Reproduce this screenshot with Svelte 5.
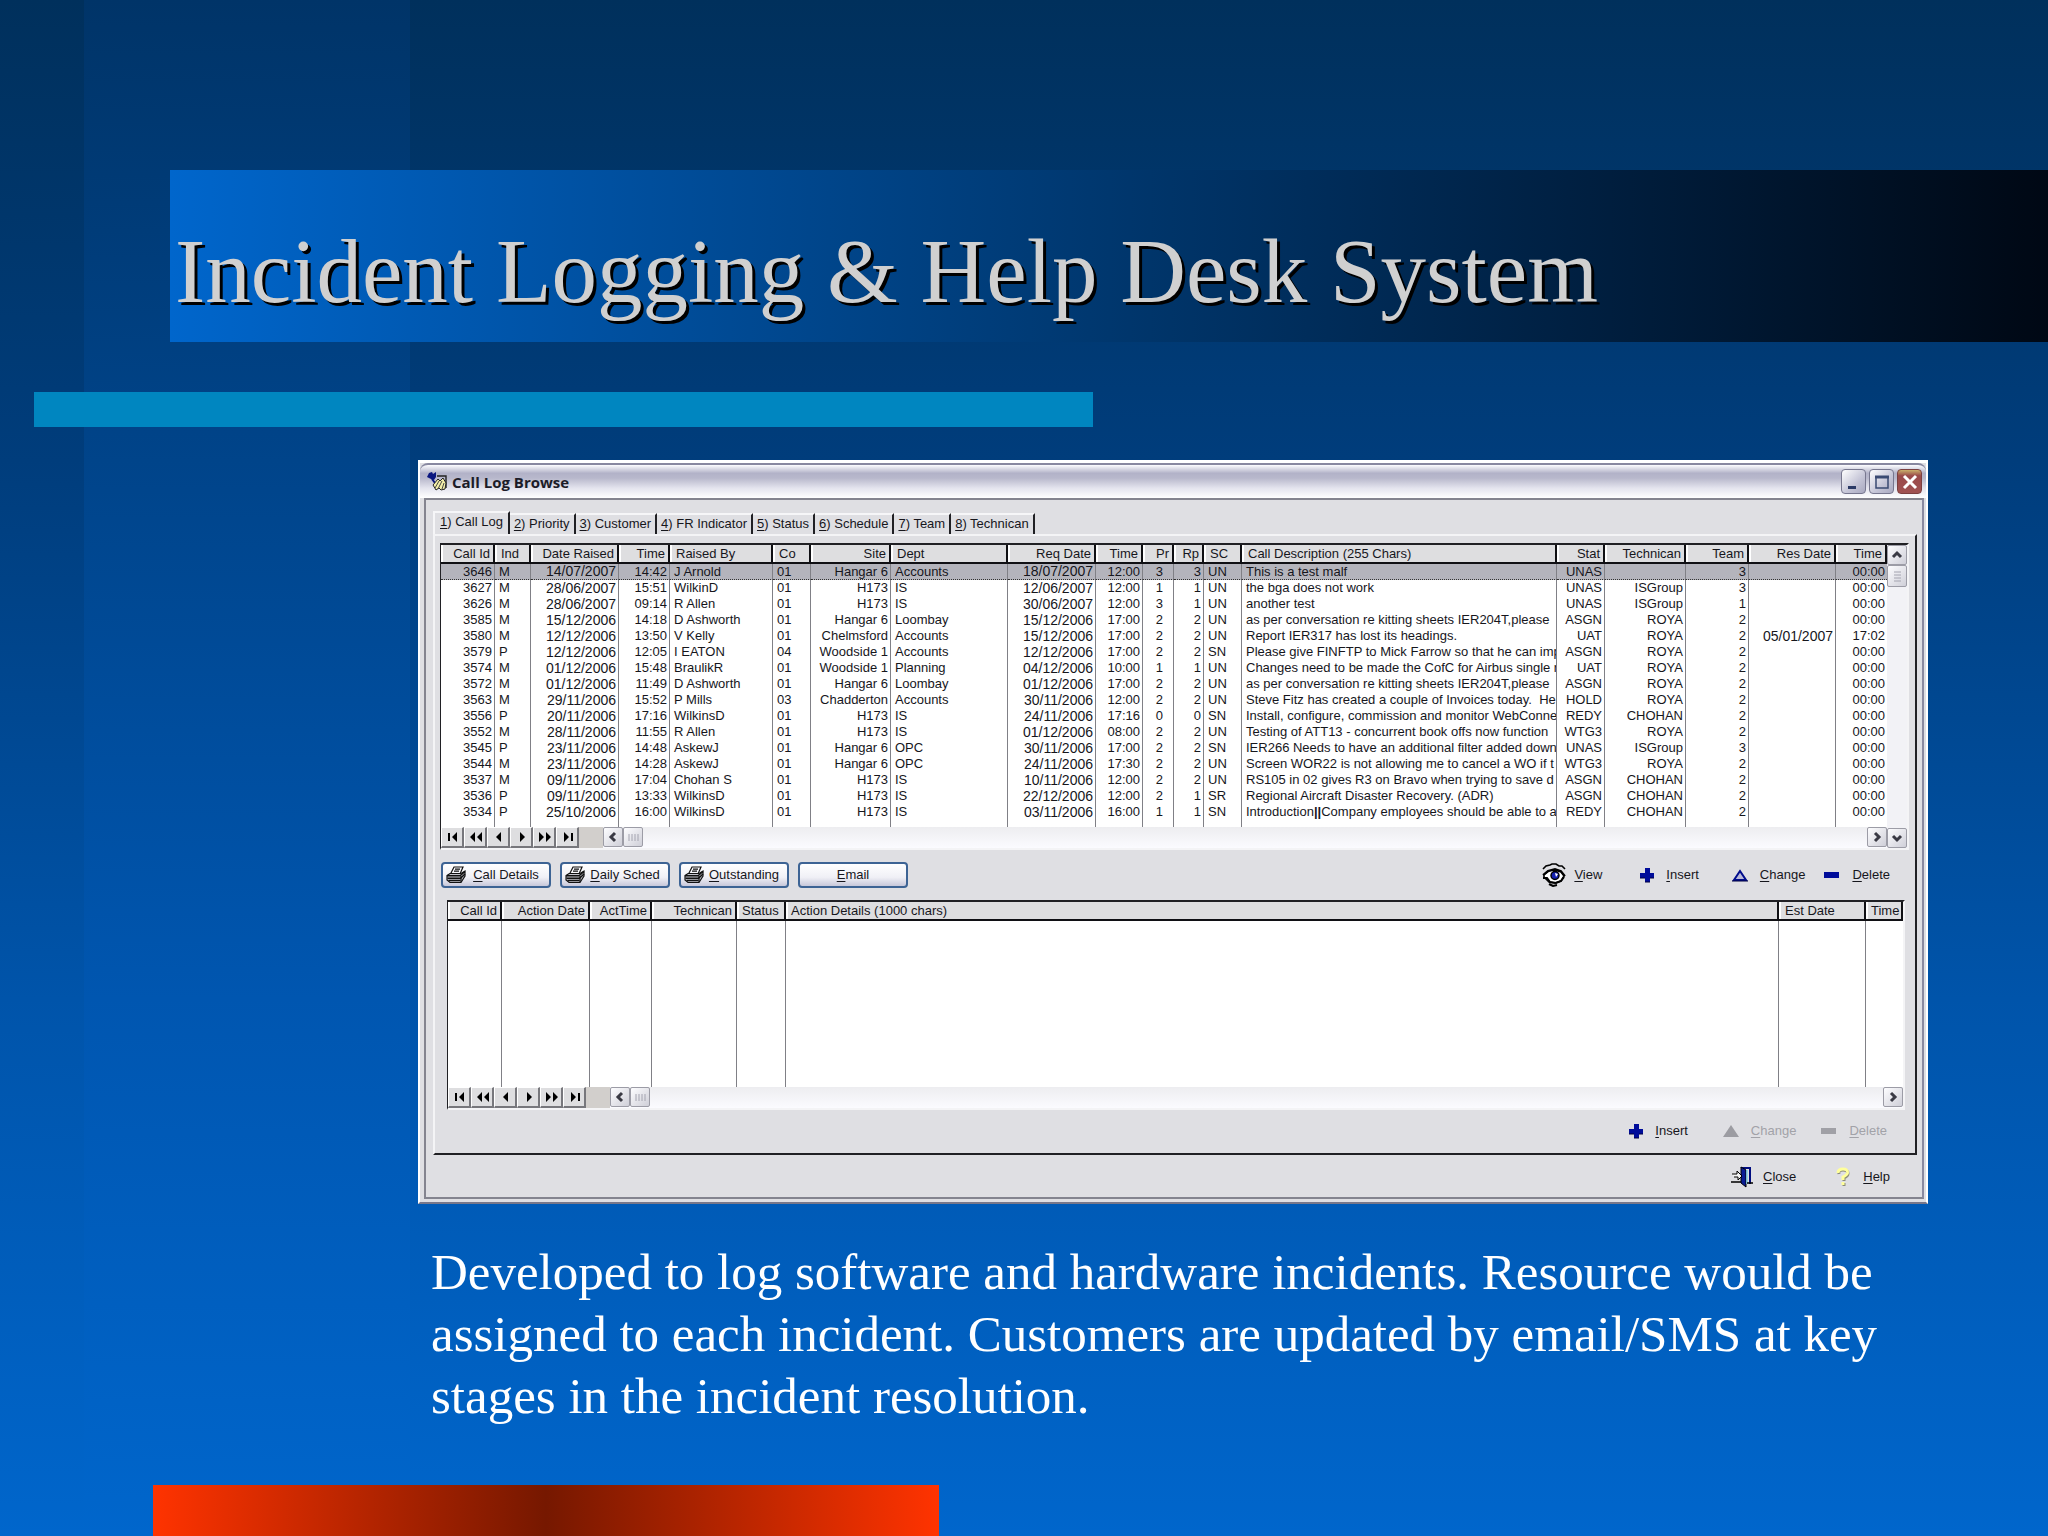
<script>
  const tabs = ['Call Log', 'Priority', 'Customer', 'FR Indicator', 'Status', 'Schedule', 'Team', 'Technican'];

  const callCols = [
    { t: 'Call Id', w: 'w54', r: true },
    { t: 'Ind', w: 'w36' },
    { t: 'Date Raised', w: 'w88', r: true, date: true },
    { t: 'Time', w: 'w51', r: true },
    { t: 'Raised By', w: 'w103' },
    { t: 'Co', w: 'w38' },
    { t: 'Site', w: 'w80', r: true },
    { t: 'Dept', w: 'w117' },
    { t: 'Req Date', w: 'w88', r: true, date: true },
    { t: 'Time', w: 'w47', r: true },
    { t: 'Pr', w: 'w31', r: true, pr: true },
    { t: 'Rp', w: 'w30', r: true },
    { t: 'SC', w: 'w38' },
    { t: 'Call Description (255 Chars)', w: 'auto' },
    { t: 'Stat', w: 'w48', r: true },
    { t: 'Technican', w: 'w81', r: true },
    { t: 'Team', w: 'w63', r: true },
    { t: 'Res Date', w: 'w87', r: true, date: true },
    { t: 'Time', w: 'w51', r: true }
  ];

  const calls = `3646|M|14/07/2007|14:42|J Arnold|01|Hangar 6|Accounts|18/07/2007|12:00|3|3|UN|This is a test malf|UNAS||3||00:00
3627|M|28/06/2007|15:51|WilkinD|01|H173|IS|12/06/2007|12:00|1|1|UN|the bga does not work|UNAS|ISGroup|3||00:00
3626|M|28/06/2007|09:14|R Allen|01|H173|IS|30/06/2007|12:00|3|1|UN|another test|UNAS|ISGroup|1||00:00
3585|M|15/12/2006|14:18|D Ashworth|01|Hangar 6|Loombay|15/12/2006|17:00|2|2|UN|as per conversation re kitting sheets IER204T,please|ASGN|ROYA|2||00:00
3580|M|12/12/2006|13:50|V Kelly|01|Chelmsford|Accounts|15/12/2006|17:00|2|2|UN|Report IER317 has lost its headings.|UAT|ROYA|2|05/01/2007|17:02
3579|P|12/12/2006|12:05|I EATON|04|Woodside 1|Accounts|12/12/2006|17:00|2|2|SN|Please give FINFTP to Mick Farrow so that he can imp|ASGN|ROYA|2||00:00
3574|M|01/12/2006|15:48|BraulikR|01|Woodside 1|Planning|04/12/2006|10:00|1|1|UN|Changes need to be made the CofC for Airbus single re|UAT|ROYA|2||00:00
3572|M|01/12/2006|11:49|D Ashworth|01|Hangar 6|Loombay|01/12/2006|17:00|2|2|UN|as per conversation re kitting sheets IER204T,please|ASGN|ROYA|2||00:00
3563|M|29/11/2006|15:52|P Mills|03|Chadderton|Accounts|30/11/2006|12:00|2|2|UN|Steve Fitz has created a couple of Invoices today.  He|HOLD|ROYA|2||00:00
3556|P|20/11/2006|17:16|WilkinsD|01|H173|IS|24/11/2006|17:16|0|0|SN|Install, configure, commission and monitor WebConnec|REDY|CHOHAN|2||00:00
3552|M|28/11/2006|11:55|R Allen|01|H173|IS|01/12/2006|08:00|2|2|UN|Testing of ATT13 - concurrent book offs now function|WTG3|ROYA|2||00:00
3545|P|23/11/2006|14:48|AskewJ|01|Hangar 6|OPC|30/11/2006|17:00|2|2|SN|IER266 Needs to have an additional filter added down|UNAS|ISGroup|3||00:00
3544|M|23/11/2006|14:28|AskewJ|01|Hangar 6|OPC|24/11/2006|17:30|2|2|UN|Screen WOR22 is not allowing me to cancel a WO if t|WTG3|ROYA|2||00:00
3537|M|09/11/2006|17:04|Chohan S|01|H173|IS|10/11/2006|12:00|2|2|UN|RS105 in 02 gives R3 on Bravo when trying to save d|ASGN|CHOHAN|2||00:00
3536|P|09/11/2006|13:33|WilkinsD|01|H173|IS|22/12/2006|12:00|2|1|SR|Regional Aircraft Disaster Recovery. (ADR)|ASGN|CHOHAN|2||00:00
3534|P|25/10/2006|16:00|WilkinsD|01|H173|IS|03/11/2006|16:00|1|1|SN|Introduction¶Company employees should be able to ac|REDY|CHOHAN|2||00:00`
    .split('\n')
    .map((line) => line.split('|'));

  const actionCols = [
    { t: 'Call Id', w: 'w54', r: true },
    { t: 'Action Date', w: 'w88', r: true },
    { t: 'ActTime', w: 'w62', r: true },
    { t: 'Technican', w: 'w85', r: true },
    { t: 'Status', w: 'w49', tight: true },
    { t: 'Action Details (1000 chars)', w: 'auto', tight: true },
    { t: 'Est Date', w: 'w87' },
    { t: 'Time', w: 'w37', tight: true }
  ];

  const navs = [
    { label: 'First', d: 'M5 5h2v8h-2zM14 4v10l-5-5z' },
    { label: 'Page up', d: 'M9 4v10l-5-5zM16 4v10l-5-5z' },
    { label: 'Previous', d: 'M12 4v10l-5-5z' },
    { label: 'Next', d: 'M8 4v10l5-5z' },
    { label: 'Page down', d: 'M4 4v10l5-5zM11 4v10l5-5z' },
    { label: 'Last', d: 'M6 4v10l5-5zM13 5h2v8h-2z' }
  ];
</script>

{#snippet key(text)}<span class="cap"><u>{text[0]}</u>{text.slice(1)}</span>{/snippet}

{#snippet plus()}
  <svg class="ic" width="16" height="16" viewBox="0 0 16 16"><path d="M6 1h5v5h4v5h-4v4H6v-4H1V6h5z" fill="#000c9a" /><path d="M6 15h5M1 11h5M11 11h4" stroke="#000040" /></svg>
{/snippet}
{#snippet triangle(off)}
  {#if off}
    <svg class="ic" width="16" height="16" viewBox="0 0 16 16"><path d="M8 2L16 14H0z" fill="#9c9ca2" /></svg>
  {:else}
    <svg class="ic" width="16" height="16" viewBox="0 0 16 16"><path d="M8 4L14 13H2z" fill="#b9b9d8" stroke="#000c8c" stroke-width="2" /><path d="M0 14h16" stroke="#000040" /></svg>
  {/if}
{/snippet}
{#snippet minus(off)}
  <svg class="ic" width="16" height="16" viewBox="0 0 16 16"><path d="M0 5h15v6H0z" fill={off ? '#a0a0a6' : '#000c9a'} /></svg>
{/snippet}
{#snippet printer()}
  <svg width="20" height="18" viewBox="0 0 20 18" fill="none" stroke="#111" stroke-width="1.2">
    <path d="M4.500 8L8 1h9l-3 7z" fill="#f6f6fa" /><path d="M9 3.200h5M8 5.200h5" />
    <path d="M1 9.500L4 7.500h11L19 5v5l-4 6.500H4L1 14z" fill="#c4c4cc" />
    <path d="M1 9.800h13L19 5.500M1.500 12.300h13L19 8M2.500 14.600h12" stroke-width="1.500" />
    <path d="M15 10v6" />
  </svg>
{/snippet}

{#snippet hbar()}
  <div class="hbar">
    {#each navs as n}
      <button class="nav" aria-label={n.label}><svg width="18" height="18" viewBox="0 0 18 18"><path d={n.d} /></svg></button>
    {/each}
    <span class="gap"></span>
    <button class="arrow" aria-label="Scroll left"><svg width="16" height="16" viewBox="0 0 16 16"><path d="M10 4L6 8l4 4" /></svg></button>
    <button class="arrow thumb" aria-label="Horizontal scroll thumb"><svg width="16" height="16" viewBox="0 0 16 16"><path d="M4 5v7M7 5v7M10 5v7M13 5v7" /></svg></button>
    <span class="track"></span>
    <button class="arrow" aria-label="Scroll right"><svg width="16" height="16" viewBox="0 0 16 16"><path d="M6 4l4 4-4 4" /></svg></button>
  </div>
{/snippet}

<main class="slide">
  <header><h1>Incident Logging &amp; Help Desk System</h1></header>
  <div class="rule"></div>

  <section class="window" aria-label="Call Log Browse">
    <div class="titlebar">
      <svg width="22" height="22" viewBox="0 0 22 22">
        <path d="M2 2l3-1 1 2 3-2v5l-2 3-3-1-4-2z" fill="#0a1680" /><path d="M5 8l3 4" stroke="#0a1680" stroke-width="2" />
        <path d="M10 5h9v12" fill="none" stroke="#222" stroke-width="1.4" />
        <path d="M6 14l5-6 2 2 3-3 3 5-1 6-4 1-2-2-3 2z" fill="#f3efa8" stroke="#222" />
        <path d="M8 17l4-7M11 18l4-8M15 18l2-6" stroke="#444" />
      </svg>
      <h2>Call Log Browse</h2>
      <button class="wb" aria-label="Minimize"><svg width="22" height="22" viewBox="0 0 22 22"><path d="M5 15h8v3H5z" fill="#2b3a66" /></svg></button>
      <button class="wb" aria-label="Maximize"><svg width="22" height="22" viewBox="0 0 22 22"><path d="M5 6h12v11H5z" fill="none" stroke="#3a4a72" stroke-width="1.5" /><path d="M4 6h14" stroke="#3a4a72" stroke-width="3" /></svg></button>
      <button class="wb close" aria-label="Close window"><svg width="22" height="22" viewBox="0 0 22 22"><path d="M5 5l12 12M17 5L5 17" stroke="#fff" stroke-width="3" /></svg></button>
    </div>

    <div class="client">
      <div class="tabs" role="tablist">
        {#each tabs as t, i}
          <button class="tab" class:on={i === 0} role="tab" aria-selected={i === 0}><u>{i + 1}</u>) {t}</button>
        {/each}
      </div>

      <div class="panel">
        <div class="grid">
          <div class="main">
            <div class="sheet">
              <table>
                <colgroup>{#each callCols as c}<col class={c.w} />{/each}</colgroup>
                <thead><tr>{#each callCols as c}<th class:r={c.r}>{c.t}</th>{/each}</tr></thead>
                <tbody>
                  {#each calls as row, i}
                    <tr class:sel={i === 0}>
                      {#each row as v, j}<td class:r={callCols[j].r} class:date={callCols[j].date} class:pr={callCols[j].pr}>{#if v.includes('¶')}{v.split('¶')[0]}<b>||</b>{v.split('¶')[1]}{:else}{v}{/if}</td>{/each}
                    </tr>
                  {/each}
                  <tr class="rest">{#each callCols as _}<td></td>{/each}</tr>
                </tbody>
              </table>
            </div>
            {@render hbar()}
          </div>
          <div class="vbar">
            <button class="arrow" aria-label="Scroll up"><svg width="16" height="16" viewBox="0 0 16 16"><path d="M4 10l4-4 4 4" /></svg></button>
            <button class="arrow thumb" aria-label="Vertical scroll thumb"><svg width="16" height="16" viewBox="0 0 16 16"><path d="M5 4h7M5 7h7M5 10h7M5 13h7" /></svg></button>
            <span class="track"></span>
            <button class="arrow" aria-label="Scroll down"><svg width="16" height="16" viewBox="0 0 16 16"><path d="M4 6l4 4 4-4" /></svg></button>
          </div>
        </div>

        <div class="tools">
          {#each ['Call Details', 'Daily Sched', 'Outstanding'] as b}
            <button class="xp">{@render printer()}<span class="lbl">{@render key(b)}</span></button>
          {/each}
          <button class="xp"><span class="lbl">{@render key('Email')}</span></button>
          <span class="grow"></span>
          <button class="flat view">
            <svg width="24" height="24" viewBox="0 0 24 24" fill="none" stroke="#000">
              <path d="M1 6l3-3 4-1 2-1h4l3 2h3l3 3" stroke-width="1.6" />
              <path d="M2 12l5-4 6-1 6 2 3 4-3 5-6 2-6-1-5-5z" fill="#fff" stroke-width="1.6" />
              <path d="M1 12l5-4 7-2 6 2 4 5M1 15h4l3 4 6 1 5-2 3-4M7 21l4 2 4-1" stroke-width="2" />
              <circle cx="13" cy="12.500" r="4" fill="#1420b0" stroke-width="1.500" /><path d="M13 10l3 1-2 3z" fill="#fff" stroke="none" />
            </svg>
            {@render key('View')}
          </button>
          <button class="flat ins">{@render plus()}{@render key('Insert')}</button>
          <button class="flat chg">{@render triangle(false)}{@render key('Change')}</button>
          <button class="flat del">{@render minus(false)}{@render key('Delete')}</button>
        </div>

        <div class="grid lower">
          <div class="main">
            <div class="sheet">
              <table>
                <colgroup>{#each actionCols as c}<col class={c.w} />{/each}</colgroup>
                <thead><tr>{#each actionCols as c}<th class:r={c.r} class:tight={c.tight}>{c.t}</th>{/each}</tr></thead>
                <tbody><tr class="empty">{#each actionCols as _}<td></td>{/each}</tr></tbody>
              </table>
            </div>
            {@render hbar()}
          </div>
        </div>

        <div class="tools second">
          <span class="grow"></span>
          <button class="flat ins">{@render plus()}{@render key('Insert')}</button>
          <button class="flat chg" disabled>{@render triangle(true)}{@render key('Change')}</button>
          <button class="flat del" disabled>{@render minus(true)}{@render key('Delete')}</button>
        </div>
      </div>

      <div class="foot">
        <button class="flat door">
          <svg width="22" height="22" viewBox="0 0 22 22">
            <path d="M9 1h11v17h-2V3h-5z" fill="#000c80" /><path d="M10 1l5 3v17l-5-4z" fill="#0a1c96" stroke="#000" />
            <path d="M16 4v14" stroke="#7fd0e8" stroke-width="1.500" />
            <path d="M1 8h5V5l5 5-4 4v-3H3" fill="#f4f4f4" stroke="#000" /><path d="M0 16h10M16 17h6" stroke="#000" stroke-width="1.500" />
          </svg>
          {@render key('Close')}
        </button>
        <button class="flat help">
          <svg width="14" height="20" viewBox="0 0 14 20" fill="none">
            <path d="M3 7Q2 3 7 3t5 3.500Q12 9 8 11v3M8 16v3" stroke="#8c8c78" stroke-width="3" /><path d="M2 6Q2 2 7 2t4.500 4Q11 8 7 10v3M7 15v3" stroke="#ffff9c" stroke-width="3" />
          </svg>
          {@render key('Help')}
        </button>
      </div>
    </div>
  </section>

  <p class="blurb">Developed to log software and hardware incidents. Resource would be assigned to each incident. Customers are updated by email/SMS at key stages in the incident resolution.</p>
  <div class="footer-bar"></div>
</main>

<style>
  :global(body) { margin: 0; }
  * { box-sizing: border-box; }
  .slide {
    min-height: 100vh;
    display: flex;
    flex-direction: column;
    background:
      linear-gradient(180deg, #003468 0, #00448a 30%, #0056b0 65%, #0066cc 100%) 84px 0 / 326px 100% no-repeat,
      linear-gradient(180deg, #00305c 0, #003d7c 30%, #0054aa 65%, #0066cc 100%);
  }
  header {
    margin: 170px 0 0 170px;
    padding: 49px 5px 17px;
    background: linear-gradient(90deg, #0066cc, #00376e 50%, #000814);
  }
  h1 {
    margin: 0;
    font: 400 91px/106px "Liberation Serif", serif;
    color: #d0d0d0;
    text-shadow: 3px 3px 0 #000;
  }
  .rule { margin: 50px 0 0 34px; width: 51.7%; height: 35px; background: #0086c0; }

  .window {
    margin: 33px 120px 0 418px;
    border: 2px solid #fff;
    border-bottom-color: #77778a;
    border-top-width: 3px;
    background: #dfdfe3;
    font: 13px/16px "Liberation Sans", Arial, sans-serif;
    color: #16161c;
  }
  .titlebar {
    display: flex;
    align-items: center;
    gap: 3px;
    height: 35px;
    padding: 0 4px 0 7px;
    border-top: 2px solid #8888a0;
    border-radius: 8px 8px 0 0;
    background: linear-gradient(#fdfdff 0, #b2b2c8 25%, #b8b8cc 40%, #e4e4ee 70%, #fff 100%);
  }
  h2 { margin: 0 auto 0 0; font: 700 15px/20px "Open Sans", sans-serif; color: #1c1c28; }
  button { font: inherit; color: inherit; padding: 0; margin: 0; }
  .wb {
    width: 25px;
    height: 25px;
    display: grid;
    place-items: center;
    border: 1px solid #77778f;
    border-radius: 4px;
    background: linear-gradient(135deg, #fff, #c4c4d6 60%, #a9a9c0);
  }
  .wb.close { background: linear-gradient(#c9b06a 0, #9a4a4a 25%, #a05252); border-color: #7c4040; }
  .client {
    margin: 0 2px 3px 4px;
    padding: 11px 5px 9px 7px;
    border: 2px solid #84848f;
    border-right-color: #8a8aa0;
  }

  .tabs { display: flex; align-items: flex-end; height: 23px; }
  .tab {
    height: 21px;
    padding: 0 4px 1px;
    border: 0;
    border-top: 2px solid #f6f6f8;
    border-right: 2px solid #202024;
    background: none;
    white-space: nowrap;
  }
  .tab.on { height: 23px; padding: 0 5px 3px; border-left: 2px solid #f6f6f8; }

  .panel {
    border: 2px solid #f4f4f6;
    border-right-color: #202024;
    border-bottom-color: #202024;
    padding: 7px 6px 0 5px;
  }
  .grid {
    display: flex;
    border: 1px solid #202024;
    border-width: 2px 2px 2px 1px;
    border-right-color: #f4f4f6;
    border-bottom-color: #f4f4f6;
    background: #fff;
  }
  .main { flex: 1; min-width: 0; }
  .sheet { overflow: hidden; }
  table { width: 100%; table-layout: fixed; border-collapse: separate; border-spacing: 0; }
  th {
    height: 19px;
    padding: 0 3px 0 6px;
    border-right: 2px solid #101014;
    border-bottom: 2px solid #101014;
    background: linear-gradient(90deg, #fff 2px, #dedee0 2px);
    font-weight: 400;
    line-height: 15px;
    text-align: left;
    white-space: nowrap;
    overflow: hidden;
  }
  th.tight { padding-left: 5px; padding-right: 0; }
  td {
    height: 16px;
    padding: 0 2px 0 4px;
    border-right: 1px solid #808086;
    line-height: 16px;
    white-space: pre;
    overflow: hidden;
  }
  td:last-child { border-right: 0; }
  .r { text-align: right; }
  td.r { padding-left: 0; }
  td.date { font-size: 14px; }
  td.pr { padding-right: 10px; }
  .sel td { background: #b4b4bc; border-bottom: 1px dotted #333; line-height: 15px; }
  .rest td { height: 7px; }
  .empty td { height: 166px; }
  .w30 { width: 30px; } .w31 { width: 31px; } .w36 { width: 36px; } .w37 { width: 37px; }
  .w38 { width: 38px; } .w47 { width: 47px; } .w48 { width: 48px; } .w49 { width: 49px; }
  .w51 { width: 51px; } .w54 { width: 54px; } .w62 { width: 62px; } .w63 { width: 63px; }
  .w80 { width: 80px; } .w81 { width: 81px; } .w85 { width: 85px; } .w87 { width: 87px; }
  .w88 { width: 88px; } .w103 { width: 103px; } .w117 { width: 117px; }

  .hbar { display: flex; height: 21px; background: linear-gradient(#ededf0, #fbfbff); }
  .nav {
    width: 23px;
    display: grid;
    place-items: center;
    border: 1px solid #fff;
    border-right: 2px solid #77777c;
    border-bottom: 2px solid #77777c;
    background: #dedee0;
  }
  .gap { width: 24px; background: #d2cfcc; }
  .arrow {
    width: 20px;
    height: 20px;
    display: grid;
    place-items: center;
    border: 1px solid #9c9ca6;
    border-radius: 2px;
    background: linear-gradient(135deg, #fdfdff, #cfcfd8);
  }
  .arrow path { fill: none; stroke: #3a3a44; stroke-width: 3; }
  .arrow.thumb path { stroke: #a4a4b0; stroke-width: 1; }
  .track { flex: 1; }
  .vbar { display: flex; flex-direction: column; width: 20px; background: #f2f2f6; }
  .vbar .thumb { height: 22px; }

  .tools { display: flex; align-items: center; gap: 9px; padding: 12px 19px 12px 1px; }
  .grow { flex: 1; }
  .xp {
    width: 110px;
    height: 26px;
    display: flex;
    align-items: center;
    padding: 0 3px;
    border: 2px solid #3d6394;
    border-radius: 4px;
    background: linear-gradient(#fff, #f0f0f6 60%, #c8c8da);
  }
  .lbl { flex: 1; text-align: center; }
  .cap { white-space: nowrap; }
  u { text-underline-offset: 2px; }
  .flat { display: flex; align-items: center; border: 0; background: none; }
  .flat:disabled { color: #a2a2a8; }
  .view { gap: 8px; margin-right: 28px; }
  .ins { gap: 11px; margin-right: 24px; }
  .chg { gap: 12px; margin-right: 10px; }
  .del { gap: 12px; }
  .lower { margin: 0 4px 0 7px; }
  .second { padding: 13px 22px 14px 0; }
  .second .ins { margin-right: 26px; }
  .second .chg { margin-right: 16px; }
  .foot { display: flex; justify-content: flex-end; gap: 40px; padding: 11px 27px 0 0; }
  .door { gap: 10px; }
  .help { gap: 13px; }

  .blurb {
    margin: 37px 120px 20px 431px;
    font: 51px/62px "Liberation Serif", serif;
    color: #fff;
  }
  .footer-bar {
    margin: auto 0 0 153px;
    width: 38.4%;
    height: 51px;
    background: linear-gradient(90deg, #ff3300, #761800 50%, #ff3300);
  }
</style>
